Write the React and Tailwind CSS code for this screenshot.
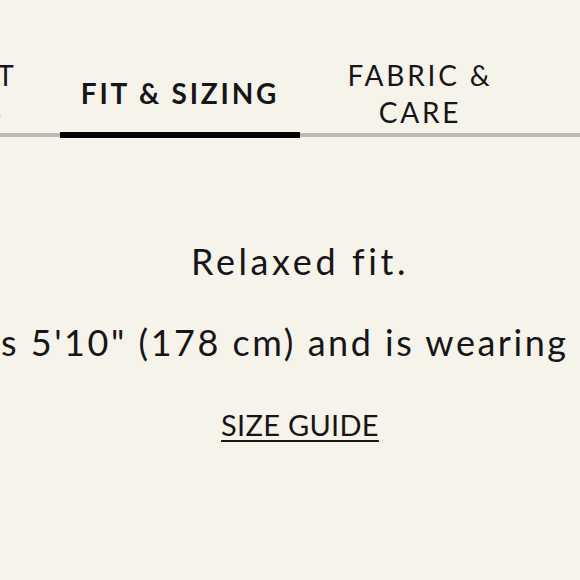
const tabs = [
  { label: 'PRODUCT DETAILS', id: 'details' },
  { label: 'FIT & SIZING', id: 'fit' },
  { label: 'FABRIC & CARE', id: 'fabric' },
  { label: 'REVIEWS', id: 'reviews' },
];

const App = () => {
  const activeTab = 'fit';

  return (
    <div
      className="w-[580px] h-[580px] overflow-hidden bg-[#f6f3eb] text-[#161616]"
      style={{ fontFamily: 'Lato, "Open Sans", sans-serif' }}
    >
      <div className="w-[600px]">
        {/* Tabs */}
        <div className="flex justify-center border-b-4 border-[#bdbab2]">
          {tabs.map((tab) => (
            <div
              key={tab.id}
              className="relative shrink-0 w-[240px] h-[133px] pt-[54px] px-[10px] flex items-center justify-center text-center"
            >
              <span
                className={`block text-[28px] leading-[37px] tracking-[0.1em] ${
                  tab.id === activeTab ? 'font-bold whitespace-nowrap' : 'font-normal'
                }`}
              >
                {tab.label}
              </span>
              {tab.id === activeTab && (
                <span className="absolute left-0 right-0 -bottom-[5px] h-[6px] bg-black" />
              )}
            </div>
          ))}
        </div>

        {/* Content */}
        <div className="flex flex-col items-center pt-[104px] text-[36px]">
          <p className="leading-[40px] tracking-[0.1em]">Relaxed fit.</p>
          <div className="flex justify-center w-full mt-[41px]">
            <p className="pr-[9px] leading-[40px] tracking-[0.07em] whitespace-nowrap shrink-0">
              Model is 5'10" (178 cm) and is wearing a size S.
            </p>
          </div>
          <a
            href="#"
            className="mt-[46px] text-[29px] leading-[34px] tracking-[0.01em] underline decoration-2 underline-offset-[4px]"
          >
            SIZE GUIDE
          </a>
        </div>
      </div>
    </div>
  );
};

export default App;
